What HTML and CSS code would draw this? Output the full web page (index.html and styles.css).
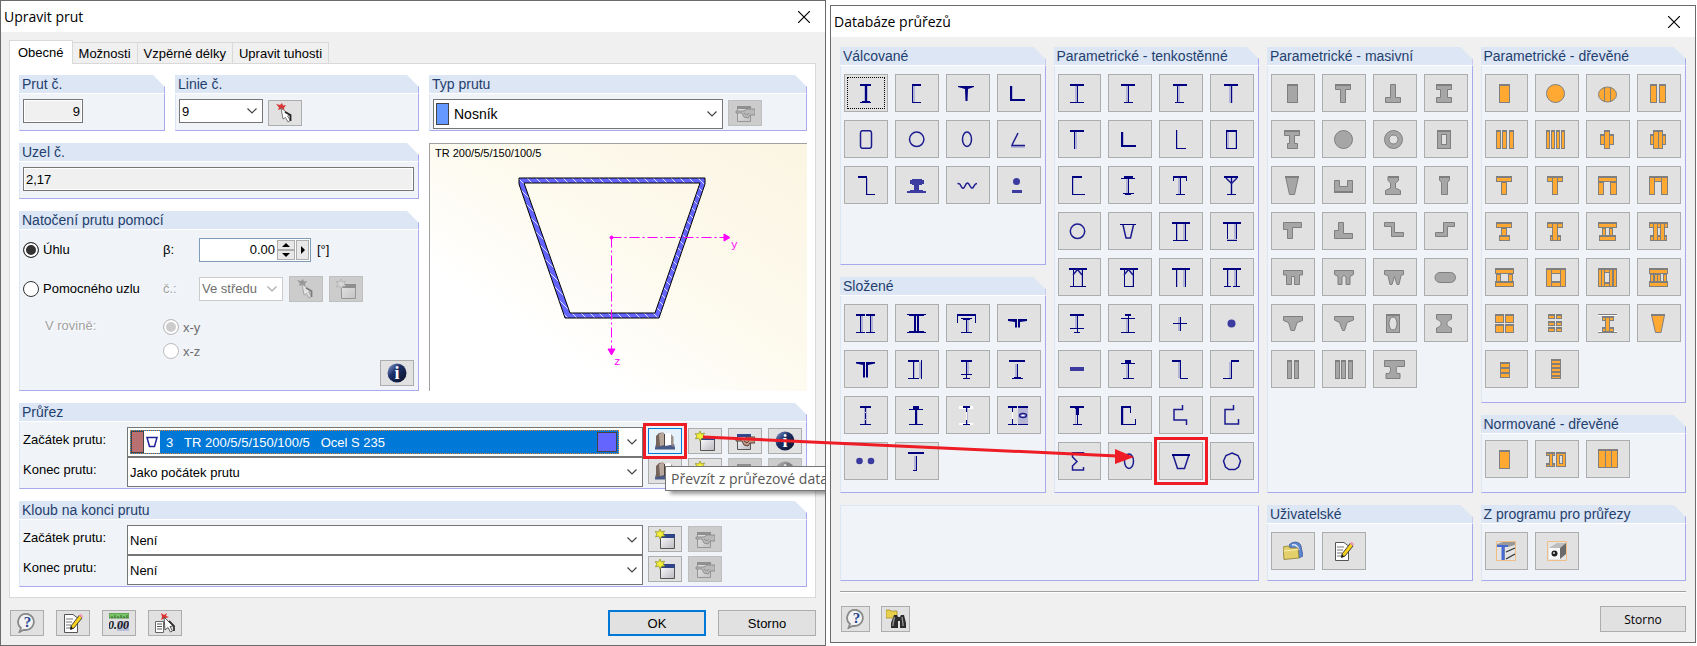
FILE: index.html
```html
<!DOCTYPE html>
<html lang="cs">

<head>
    <meta charset="UTF-8">
    <meta name="viewport" content="width=device-width, initial-scale=1.0">
    <title>Upravit prut</title>
    <link rel="stylesheet" href="styles.css">
</head>

<body>
    <svg class="paints" aria-hidden="true">
        <linearGradient id="ball" x1="0" y1="0" x2="1" y2="1">
            <stop offset="0" stop-color="#8fa6d8" />
            <stop offset=".4" stop-color="#1d2f68" />
            <stop offset="1" stop-color="#0a0f24" />
        </linearGradient>
        <linearGradient id="sheet" x1="0" y1="0" x2="1" y2="1">
            <stop offset="0" stop-color="#fff" />
            <stop offset="1" stop-color="#b9b9c0" />
        </linearGradient>
    </svg>
    <svg class="sprite" aria-hidden="true">
        <symbol id="chevron" viewBox="0 0 10 6"><path d="M.5 .5L5 5L9.500 .5" fill="none" stroke="currentColor" stroke-width="1.200" /></symbol>
        <symbol id="close" viewBox="0 0 12 12"><path d="M0 0L12 12M12 0L0 12" stroke="#000" stroke-width="1.200" /></symbol>
        <symbol id="pick" viewBox="0 0 20 20">
            <path d="M1 1L5 2L7 0L8 2.500L11 2L9 5L9.500 8L6 6L3 7L4 4.500Z" fill="#d93636" />
            <path d="M6 5L15 12L12.500 13L15.500 17.500L13 19L10.500 14.500L8 16Z" fill="#fff" stroke="#777" />
            <path d="M10 9L15.500 12V18" fill="none" stroke="#222" stroke-width="1.800" />
        </symbol>
        <symbol id="hand" viewBox="0 0 20 20">
            <path d="M2.500 3.500H15.500V18.500H2.500Z" fill="url(#sheet)" stroke="#555" />
            <path d="M2 3H16V6H2Z" fill="#33468c" />
            <path d="M20 6L12 6L9 8H1V10H7L9 14L13 15L15 12L20 12Z" fill="#c09a86" stroke="#5c4236" />
            <path d="M9 10L12 12L14 10" fill="none" stroke="#5c4236" />
        </symbol>
        <symbol id="new-window" viewBox="0 0 20 20">
            <path d="M5.500 6.500H19.500V19.500H5.500Z" fill="url(#sheet)" stroke="#555" />
            <path d="M5 5H20V9H5Z" fill="#2f4387" />
            <path d="M5 0L6.200 3L9.500 2L8 5L10 7L6.800 7.200L5 10L3.800 7L.5 8L2 5L0 2.500L3.500 3Z" fill="#f5f03a" stroke="#8d8a1c" stroke-width=".7" />
        </symbol>
        <symbol id="book" viewBox="0 0 20 20">
            <path d="M0 17L1 13H19L20 17V18.500H0Z" fill="#4a5a86" />
            <path d="M1 5L4 2L8 1.500L9.500 3V14L7 15L1 16Z" fill="#75645c" />
            <path d="M4 3L8 1.500L9 3V14L5 15Z" fill="#b8a79c" />
            <path d="M9.500 3L14 2L16 3V14L9.500 15Z" fill="#fff" />
            <path d="M16 3L18.500 6V16L16 14Z" fill="#9c9088" />
            <path d="M9.500 3V15" stroke="#4c423d" />
        </symbol>
        <symbol id="info" viewBox="0 0 20 20">
            <circle cx="10" cy="10" r="9.500" fill="url(#ball)" />
            <text x="10" y="16" text-anchor="middle" class="glyph glyph-info">i</text>
        </symbol>
        <symbol id="help" viewBox="0 0 20 20">
            <path d="M10.500 1A8 8 0 1 1 7 16.800L2.500 19L4 15A8 8 0 0 1 10.500 1Z" fill="#f2f2f2" stroke="#8a8a8a" stroke-width="1.800" />
            <text x="10.500" y="14" text-anchor="middle" class="glyph glyph-help">?</text>
        </symbol>
        <symbol id="note" viewBox="0 0 20 20">
            <path d="M1.500 1.500H10L14.500 5V19.500H1.500Z" fill="#fff" stroke="#555" />
            <path d="M3 6H10M3 9H9M3 12H8M3 15H11" stroke="#777" />
            <path d="M16.500 2L19 5L11 15L7.500 16.500L8 13Z" fill="#f7cf1d" stroke="#333" stroke-width=".9" />
            <path d="M16 2.500L17.500 .5L20 3L19 5Z" fill="#ef9db0" />
            <path d="M8 13L7.500 16.500L10 15.500Z" fill="#111" />
        </symbol>
        <symbol id="units" viewBox="0 0 20 20">
            <path d="M0 0H20V5H0Z" fill="#7cc46c" stroke="#4c8b40" />
            <path d="M3 3V5M6 2V5M9 3V5M12 2V5M15 3V5M18 2V5" stroke="#2f6a26" />
            <path d="M8 8H20V18H8Z" fill="#b5bdd8" />
            <text x="-1" y="16" class="glyph glyph-units">0.00</text>
        </symbol>
        <symbol id="pick-list" viewBox="0 0 20 20">
            <path d="M6 0L9 2L12 0L11 3L14 4L11 5L11 8L9 5.500L6 7L7 4Z" fill="#e03030" />
            <path d="M.5 8.500H8.500V19.500H.5Z" fill="#fff" stroke="#666" />
            <path d="M2 11H7M2 13.500H7M2 16H7" stroke="#555" />
            <path d="M9 4L18 13L15 13.500L17.500 18L15.500 19L13 14.500L10 17Z" fill="#fff" stroke="#555" />
            <path d="M14 8L19 13V18" fill="none" stroke="#333" stroke-width="1.800" />
        </symbol>
        <symbol id="find" viewBox="0 0 20 20">
            <path d="M0 1H4L5 2H11V9H0Z" fill="#e8cf4e" stroke="#9c8522" stroke-width=".7" />
            <path d="M8 6H11L12 8H14L15 6H18L20 14V19H14V12H12V19H5V14Z" fill="#2c2c2c" />
            <path d="M8.500 8L7 15V17M16 8L17 15V17" fill="none" stroke="#999" stroke-width="1.300" />
        </symbol>
        <symbol id="library" viewBox="0 0 20 20">
            <path d="M6 4C9 0 17 0 18 5L20 15L16 17L8 8Z" fill="#5d84cf" stroke="#34538f" stroke-width=".7" />
            <path d="M9 4Q14 3 16 9" fill="none" stroke="#dce8fb" stroke-width="1.500" />
            <path d="M0 6L5 5L7 7L15 7L16 17L1 18.500Z" fill="#e3d06b" stroke="#8d7c2d" stroke-width=".8" />
            <path d="M1 10L15 8.500" stroke="#f7efb4" />
        </symbol>
        <symbol id="shape-thin" viewBox="0 0 20 20">
            <path d="M.5 .5H19.500V19.500H.5Z" fill="#e4e4e4" stroke="#f0bd84" />
            <path d="M1 3L7 1H19V4L12 6H9V19H6V6H1Z" fill="#999" />
            <path d="M1 4H12V6H8.500V19H5.500V6H1Z" fill="#4769d0" />
            <path d="M10 11L19 7M10 18L19 13" stroke="#333" stroke-width="1.300" />
        </symbol>
        <symbol id="shape-massive" viewBox="0 0 20 20">
            <path d="M.5 .5H19.500V19.500H.5Z" fill="#e4e4e4" stroke="#f0bd84" />
            <path d="M2 7L10 2H19L13 7Z" fill="#bdbdbd" />
            <path d="M13 7L19 2V13L13 18Z" fill="#6a6a6a" />
            <path d="M2 7H13V18H2Z" fill="#f7f7f7" />
            <circle cx="7.500" cy="12.500" r="3" fill="#222" />
            <circle cx="7" cy="12" r="1" fill="#ddd" />
        </symbol>
        <symbol id="trapezoid" viewBox="0 0 12 12"><path d="M1 1.500H11L8.500 10.500H3.500Z" fill="#fff" stroke="#22229a" stroke-width="1.500" /></symbol>
    </svg>

    <main class="desktop">
        <section class="dialog" aria-label="Upravit prut">
            <header class="titlebar">
                <h1>Upravit prut</h1>
                <button class="close" aria-label="Zavřít"><svg><use href="#close" /></svg></button>
            </header>

            <div class="member">
                <nav class="tabs">
                    <button class="tab active">Obecné</button>
                    <button class="tab">Možnosti</button>
                    <button class="tab">Vzpěrné délky</button>
                    <button class="tab">Upravit tuhosti</button>
                </nav>

                <div class="page">
                    <div class="columns">
                        <div class="stack">
                            <div class="numbers">
                                <section class="group">
                                    <h2><label for="member-no">Prut č.</label></h2>
                                    <div class="group-body row">
                                        <input class="field member-no" id="member-no" value="9" readonly>
                                    </div>
                                </section>
                                <section class="group">
                                    <h2><label for="line-no">Linie č.</label></h2>
                                    <div class="group-body row">
                                        <span class="combo line-no">
                                            <select id="line-no"><option>9</option></select>
                                            <svg class="chevron"><use href="#chevron" /></svg>
                                        </span>
                                        <button class="tool" aria-label="Vybrat linii"><svg><use href="#pick" /></svg></button>
                                    </div>
                                </section>
                            </div>
                            <section class="group">
                                <h2><label for="node-no">Uzel č.</label></h2>
                                <div class="group-body row">
                                    <input class="field" id="node-no" value="2,17" readonly>
                                </div>
                            </section>
                            <section class="group grow">
                                <h2>Natočení prutu pomocí</h2>
                                <div class="group-body rotation">
                                    <div class="rotation-form">
                                        <label class="radio"><input type="radio" name="rotation" checked>Úhlu</label>
                                        <label for="beta">β:</label>
                                        <div class="row-inline">
                                            <span class="spin">
                                                <input id="beta" value="0.00">
                                                <span class="spin-steps">
                                                    <button aria-label="Zvýšit"><i class="up"></i></button>
                                                    <button aria-label="Snížit"><i class="down"></i></button>
                                                </span>
                                                <button class="spin-more" aria-label="Další"><i class="right"></i></button>
                                            </span>
                                            <span>[°]</span>
                                        </div>
                                        <label class="radio"><input type="radio" name="rotation">Pomocného uzlu</label>
                                        <label class="muted" for="node-pos">č.:</label>
                                        <div class="row-inline">
                                            <span class="combo node-pos off">
                                                <select id="node-pos" disabled><option>Ve středu</option></select>
                                                <svg class="chevron"><use href="#chevron" /></svg>
                                            </span>
                                            <button class="tool" disabled aria-label="Vybrat uzel"><svg><use href="#pick" /></svg></button>
                                            <button class="tool" disabled aria-label="Nový uzel"><svg><use href="#new-window" /></svg></button>
                                        </div>
                                        <span class="plane-label muted">V rovině:</span>
                                        <div class="plane">
                                            <label class="radio off"><input type="radio" name="plane" checked disabled>x-y</label>
                                            <label class="radio off"><input type="radio" name="plane" disabled>x-z</label>
                                        </div>
                                    </div>
                                    <button class="tool" aria-label="Informace"><svg><use href="#info" /></svg></button>
                                </div>
                            </section>
                        </div>

                        <div class="stack">
                            <section class="group">
                                <h2><label for="member-type">Typ prutu</label></h2>
                                <div class="group-body row">
                                    <span class="combo tall member-type">
                                        <i class="swatch blue"></i>
                                        <select id="member-type"><option>Nosník</option></select>
                                        <svg class="chevron"><use href="#chevron" /></svg>
                                    </span>
                                    <button class="tool" disabled aria-label="Upravit typ"><svg><use href="#hand" /></svg></button>
                                </div>
                            </section>
                            <div class="preview">
                                <svg viewBox="0 0 377 247">
                                    <defs>
                                        <pattern id="hatch" width="9" height="9" patternUnits="userSpaceOnUse">
                                            <path d="M0 0H9V9H0Z" fill="#6464ff" />
                                            <path d="M0 0L9 9" stroke="#dcdcff" />
                                        </pattern>
                                    </defs>
                                    <text x="5" y="13" class="preview-name">TR 200/5/5/150/100/5</text>
                                    <path d="M89 34H275V40L229 174H135L89 40ZM94 39L140 169H225L270 39Z" fill="url(#hatch)" fill-rule="evenodd" stroke="#000" />
                                    <g class="axis">
                                        <path d="M181.500 93.500H295M181.500 93.500V207" stroke-dasharray="10 3 2 3" />
                                        <circle cx="181.500" cy="93.500" r="1.500" />
                                        <path class="tip" d="M294 90L300 93.500L294 97Z" />
                                        <path class="tip" d="M178 205L181.500 211L185 205Z" />
                                        <text x="301" y="104">y</text>
                                        <text x="184" y="221">z</text>
                                    </g>
                                </svg>
                            </div>
                        </div>
                    </div>

                    <section class="group">
                        <h2>Průřez</h2>
                        <div class="group-body ends">
                            <label for="section-start">Začátek prutu:</label>
                            <span class="combo tall">
                                <span class="picked">
                                    <i class="swatch brown"></i>
                                    <svg class="mini"><use href="#trapezoid" /></svg>
                                    <select id="section-start"><option>3&nbsp;&nbsp;&nbsp;TR 200/5/5/150/100/5&nbsp;&nbsp;&nbsp;Ocel S 235</option></select>
                                    <i class="swatch violet"></i>
                                </span>
                                <svg class="chevron"><use href="#chevron" /></svg>
                            </span>
                            <div class="tools">
                                <span class="anchor">
                                    <button class="tool hot marked" aria-label="Převzít z databáze" aria-describedby="tip"><svg><use href="#book" /></svg></button>
                                    <span class="tooltip" id="tip" role="tooltip">Převzít z průřezové data</span>
                                </span>
                                <button class="tool" aria-label="Nový průřez"><svg><use href="#new-window" /></svg></button>
                                <button class="tool" aria-label="Upravit průřez"><svg><use href="#hand" /></svg></button>
                                <button class="tool" aria-label="Informace o průřezu"><svg><use href="#info" /></svg></button>
                            </div>
                            <label for="section-end">Konec prutu:</label>
                            <span class="combo tall">
                                <select id="section-end"><option>Jako počátek prutu</option></select>
                                <svg class="chevron"><use href="#chevron" /></svg>
                            </span>
                            <div class="tools">
                                <button class="tool" aria-label="Převzít z databáze"><svg><use href="#book" /></svg></button>
                                <button class="tool" aria-label="Nový průřez"><svg><use href="#new-window" /></svg></button>
                                <button class="tool" disabled aria-label="Upravit průřez"><svg><use href="#hand" /></svg></button>
                                <button class="tool" disabled aria-label="Informace o průřezu"><svg><use href="#info" /></svg></button>
                            </div>
                        </div>
                    </section>

                    <section class="group">
                        <h2>Kloub na konci prutu</h2>
                        <div class="group-body ends">
                            <label for="hinge-start">Začátek prutu:</label>
                            <span class="combo tall">
                                <select id="hinge-start"><option>Není</option></select>
                                <svg class="chevron"><use href="#chevron" /></svg>
                            </span>
                            <div class="tools">
                                <button class="tool" aria-label="Nový kloub"><svg><use href="#new-window" /></svg></button>
                                <button class="tool" disabled aria-label="Upravit kloub"><svg><use href="#hand" /></svg></button>
                            </div>
                            <label for="hinge-end">Konec prutu:</label>
                            <span class="combo tall">
                                <select id="hinge-end"><option>Není</option></select>
                                <svg class="chevron"><use href="#chevron" /></svg>
                            </span>
                            <div class="tools">
                                <button class="tool" aria-label="Nový kloub"><svg><use href="#new-window" /></svg></button>
                                <button class="tool" disabled aria-label="Upravit kloub"><svg><use href="#hand" /></svg></button>
                            </div>
                        </div>
                    </section>
                </div>

                <footer class="actions">
                    <button class="tool" aria-label="Nápověda"><svg><use href="#help" /></svg></button>
                    <button class="tool" aria-label="Komentář"><svg><use href="#note" /></svg></button>
                    <button class="tool" aria-label="Jednotky"><svg><use href="#units" /></svg></button>
                    <button class="tool" aria-label="Převzít"><svg><use href="#pick-list" /></svg></button>
                    <button class="push default">OK</button>
                    <button class="push">Storno</button>
                </footer>
            </div>
        </section>

        <section class="dialog library" aria-label="Databáze průřezů">
            <header class="titlebar">
                <h1>Databáze průřezů</h1>
                <button class="close" aria-label="Zavřít"><svg><use href="#close" /></svg></button>
            </header>

            <div class="catalog">
                <div class="stack">
                    <section class="group grow">
                        <h2>Válcované</h2>
                        <div class="group-body tiles steel" data-set="rolled"></div>
                    </section>
                    <section class="group">
                        <h2>Složené</h2>
                        <div class="group-body tiles steel" data-set="built"></div>
                    </section>
                </div>
                <section class="group">
                    <h2>Parametrické - tenkostěnné</h2>
                    <div class="group-body tiles steel" data-set="thin"></div>
                </section>
                <section class="group">
                    <h2>Parametrické - masivní</h2>
                    <div class="group-body tiles concrete" data-set="massive"></div>
                </section>
                <div class="stack">
                    <section class="group grow">
                        <h2>Parametrické - dřevěné</h2>
                        <div class="group-body tiles timber" data-set="timber"></div>
                    </section>
                    <section class="group">
                        <h2>Normované - dřevěné</h2>
                        <div class="group-body tiles timber standard" data-set="standard"></div>
                    </section>
                </div>

                <div class="group empty"><div class="group-body"></div></div>
                <section class="group">
                    <h2>Uživatelské</h2>
                    <div class="group-body tiles short">
                        <button class="tile" aria-label="Knihovna"><svg><use href="#library" /></svg></button>
                        <button class="tile" aria-label="Vlastní průřez"><svg><use href="#note" /></svg></button>
                    </div>
                </section>
                <section class="group">
                    <h2>Z programu pro průřezy</h2>
                    <div class="group-body tiles short">
                        <button class="tile" aria-label="Tenkostěnné průřezy"><svg><use href="#shape-thin" /></svg></button>
                        <button class="tile" aria-label="Masivní průřezy"><svg><use href="#shape-massive" /></svg></button>
                    </div>
                </section>
            </div>

            <footer class="catalog-actions">
                <button class="tool" aria-label="Nápověda"><svg><use href="#help" /></svg></button>
                <button class="tool" aria-label="Hledat"><svg><use href="#find" /></svg></button>
                <button class="push">Storno</button>
            </footer>
        </section>

        <svg class="pointer" viewBox="0 0 431 40" preserveAspectRatio="none" aria-hidden="true">
            <path d="M0 7L414 26" stroke="#ee1c25" stroke-width="3" />
            <path d="M412 19L431 27L412 34Z" fill="#ee1c25" />
        </svg>
    </main>

    <script src="sections.js"></script>
</body>

</html>
```

FILE: styles.css
```css
* {
    box-sizing: border-box;
}

body {
    margin: 0;
    background-color: white;
    color: black;
    font-family: "Liberation Sans", Arial, sans-serif;
    font-size: 13px;
}

button,
input,
select {
    margin: 0;
    font: inherit;
    color: inherit;
}

button {
    padding: 0;
}

.paints {
    position: absolute;
    width: 0;
    height: 0;
}

.sprite {
    display: none;
}

.glyph {
    font-family: "Liberation Serif", serif;
    font-weight: bold;
}

.glyph-info {
    font-size: 18px;
    fill: white;
}

.glyph-help {
    font-size: 15px;
    fill: #24408f;
}

.glyph-units {
    font-size: 12px;
    font-style: italic;
    fill: #111;
}

.desktop {
    position: relative;
    display: grid;
    grid-template-columns: 826fr 866fr;
    gap: 4px;
    padding-right: 1px;
    align-items: start;
}

/* dialogs */
.dialog {
    overflow: hidden;
    border: 1px solid #6b6b6b;
    background-color: #f0f0f0;
}

.library {
    margin-top: 5px;
}

.titlebar {
    display: flex;
    align-items: center;
    justify-content: space-between;
    height: 31px;
    padding: 0 15px 0 3px;
    background-color: white;
}

.titlebar h1 {
    margin: 0;
    font-family: "Open Sans", "Noto Sans", sans-serif;
    font-size: 14px;
    font-weight: normal;
}

.close {
    display: grid;
    border: none;
    background: none;
}

.close svg {
    width: 12px;
    height: 12px;
}

.member {
    padding: 8px 9px 9px 8px;
}

/* tabs */
.tabs {
    display: flex;
    align-items: flex-end;
}

.tab {
    height: 21px;
    padding: 0 6px;
    border: 1px solid #d9d9d9;
    border-left: none;
    border-bottom: none;
    background-color: #f0f0f0;
}

.tab.active {
    height: 24px;
    margin-bottom: -1px;
    padding: 0 8px;
    border-left: 1px solid #d9d9d9;
    background-color: white;
    z-index: 1;
}

.page {
    display: flex;
    flex-direction: column;
    gap: 12px;
    padding: 11px 8px 10px 9px;
    border: 1px solid #d9d9d9;
    background-color: white;
}

.columns {
    display: grid;
    grid-template-columns: 400fr 378fr;
    gap: 10px;
}

.stack {
    display: flex;
    flex-direction: column;
    gap: 12px;
}

.numbers {
    display: grid;
    grid-template-columns: 146fr 244fr;
    gap: 10px;
}

/* groups */
.group {
    display: flex;
    flex-direction: column;
    min-width: 0;
}

.grow {
    flex: 1;
}

.group h2 {
    height: 19px;
    margin: 0;
    padding-left: 3px;
    border-right: 1px solid #a9a9ee;
    border-bottom: 1px solid white;
    background-color: #dde6f4;
    clip-path: polygon(0 0, calc(100% - 12px) 0, 100% 12px, 100% 100%, 0 100%);
    color: #1f3f6e;
    font-size: 14px;
    font-weight: normal;
    line-height: 18px;
}

.group-body {
    flex: 1;
    border: 1px solid #a9a9ee;
    border-top: none;
    border-left-color: #dde6f4;
    background-color: #f0f4f9;
}

.row {
    display: flex;
    gap: 5px;
    min-height: 37px;
    padding: 5px 4px 4px 3px;
}

.field {
    width: 100%;
    height: 24px;
    padding: 0 2px;
    border: 1px solid #767676;
    background-color: #f0f0f0;
    box-shadow: inset 0 0 0 1px white;
}

.member-no {
    width: 60px;
    text-align: right;
}

.combo {
    display: flex;
    align-items: center;
    height: 24px;
    padding-right: 5px;
    border: 1px solid #767676;
    background-color: white;
}

.combo select {
    flex: 1;
    min-width: 0;
    height: 100%;
    padding: 0 2px;
    border: none;
    background: none;
    appearance: none;
    outline: none;
}

.combo.off {
    border-color: #ccc;
    color: #6d6d6d;
}

.combo select:disabled {
    opacity: 1;
}

.combo.tall {
    height: 30px;
}

.chevron {
    width: 10px;
    height: 6px;
    color: #444;
}

.off .chevron {
    color: #aaa;
}

.line-no {
    width: 84px;
}

.node-pos {
    width: 84px;
}

.member-type {
    width: 290px;
    margin-bottom: -6px;
    padding-left: 2px;
}

.swatch {
    width: 13px;
    height: 22px;
    border: 1px solid #444;
}

.member-type select {
    padding-left: 5px;
    font-size: 14px;
}

.blue {
    background-color: #6699ff;
}

.brown {
    background-color: #b87070;
}

.violet {
    width: 20px;
    height: 20px;
    background-color: #6464ff;
}

/* small buttons */
.tool {
    display: grid;
    flex: none;
    place-items: center;
    width: 34px;
    height: 26px;
    border: 1px solid #adadad;
    background-color: #e1e1e1;
}

.row .tool {
    margin-top: 1px;
}

.tool svg {
    width: 20px;
    height: 20px;
    overflow: visible;
}

.tool:disabled {
    border-color: #bfbfbf;
    background-color: #ccc;
}

.tool:disabled svg {
    filter: grayscale(1);
    opacity: 0.45;
}

.tool.hot {
    border-color: #0078d7;
    background-color: #e5f1fb;
}

.marked {
    outline: 3px solid #ee1c25;
    outline-offset: 2px;
}

/* rotation */
.rotation {
    display: flex;
    justify-content: space-between;
    padding: 0 4px 4px 3px;
}

.rotation > .tool {
    align-self: flex-end;
}

.rotation-form {
    display: grid;
    grid-template-columns: 140px 36px auto;
    grid-template-rows: 39px 39px auto;
    align-items: center;
    align-content: start;
}

.radio {
    display: flex;
    align-items: center;
    gap: 4px;
}

.radio input {
    width: 16px;
    height: 16px;
    border: 1px solid #333;
    border-radius: 50%;
    background-color: white;
    appearance: none;
}

.radio input:checked {
    background-color: #333;
    box-shadow: inset 0 0 0 2px white;
}

.radio.off {
    color: #6d6d6d;
}

.radio.off input {
    border-color: #bbb;
}

.radio.off input:checked {
    background-color: #ccc;
}

.row-inline {
    display: flex;
    align-items: center;
    gap: 6px;
}

.muted {
    color: #a0a0a0;
    text-shadow: 1px 1px white;
}

.spin {
    display: flex;
    align-items: center;
    gap: 1px;
    width: 112px;
    height: 24px;
    padding: 1px;
    border: 1px solid #7f9db9;
    background-color: white;
}

.spin input {
    flex: 1;
    width: 0;
    padding: 0 1px;
    border: none;
    background: none;
    text-align: right;
}

.spin-steps {
    display: grid;
    width: 18px;
    height: 20px;
}

.spin button {
    display: grid;
    place-items: center;
    border: 1px solid #adadad;
    background-color: #e8e8e8;
}

.spin .spin-more {
    width: 13px;
    height: 20px;
}

.up,
.down {
    border: 4px solid transparent;
    border-top-width: 0;
    border-bottom: 4px solid black;
}

.down {
    transform: rotate(180deg);
}

.right {
    border: 4px solid transparent;
    border-right-width: 0;
    border-left: 4px solid black;
}

.plane-label {
    align-self: start;
    padding: 8px 0 0 22px;
    line-height: 20px;
}

.plane {
    display: grid;
    grid-column: 2 / 4;
    grid-auto-rows: 24px;
    padding-top: 7px;
}

/* preview */
.preview {
    flex: 1;
    border-top: 1px solid #a0a0a0;
    border-left: 1px solid #a0a0a0;
    background-image: linear-gradient(to top right, white 25%, #fdfaee 55%, #fbf5e3);
}

.preview svg {
    display: block;
    width: 100%;
}

.preview-name {
    font-size: 11px;
}

.axis {
    fill: none;
    stroke: #f0f;
}

.axis circle,
.axis .tip {
    fill: #f0f;
}

.axis text {
    fill: #f0f;
    stroke: none;
    font-family: "Liberation Mono", monospace;
    font-size: 11px;
}

/* start / end rows */
.ends {
    display: grid;
    grid-template-columns: 104px 1fr 154px;
    column-gap: 5px;
    padding: 5px 4px 1px 3px;
}

.ends label {
    margin-right: -5px;
    line-height: 26px;
}

.ends .combo {
    margin-left: -5px;
}

.tools {
    display: flex;
    gap: 6px;
    padding-top: 1px;
}

.picked {
    display: flex;
    flex: 1;
    align-items: center;
    min-width: 0;
    height: 24px;
    margin: 0 8px 0 2px;
    padding-right: 1px;
    border: 1px dotted #e08030;
    background-color: #0078d7;
    color: white;
}

.mini {
    width: 16px;
    height: 22px;
    padding: 4px 2px;
    background-color: white;
}

.picked select {
    padding-left: 6px;
}

.anchor {
    position: relative;
}

.tooltip {
    position: absolute;
    z-index: 2;
    top: 38px;
    left: 17px;
    height: 25px;
    padding: 0 5px;
    border: 1px solid #767676;
    background-color: white;
    box-shadow: 4px 4px 4px -1px rgba(0, 0, 0, 0.4);
    color: #575757;
    font-family: "Open Sans", "Noto Sans", sans-serif;
    font-size: 14px;
    line-height: 23px;
    white-space: nowrap;
}

/* dialog buttons */
.actions {
    display: flex;
    gap: 12px;
    padding: 12px 0 0 1px;
}

.push {
    width: 98px;
    height: 26px;
    border: 1px solid #adadad;
    background-color: #e1e1e1;
}

.push.default {
    margin-left: auto;
    border: 2px solid #0078d7;
}

/* section catalog */
.catalog {
    display: grid;
    grid-template-columns: repeat(4, 1fr);
    gap: 12px 8px;
    margin: 0 9px;
    padding: 10px 0;
}

.tiles {
    display: grid;
    grid-template-columns: repeat(4, 1fr);
    gap: 8px 7px;
    align-content: start;
    padding: 8px 4px 12px 3px;
}

.tiles.standard {
    padding: 6px 4px 14px 3px;
}

.tiles.short {
    padding-bottom: 10px;
}

.tile {
    display: grid;
    place-items: center;
    height: 38px;
    border: 1px solid #adadad;
    background-color: #e1e1e1;
}

.tile svg {
    width: 20px;
    height: 20px;
    overflow: visible;
}

.tile rect {
    shape-rendering: crispEdges;
}

.tile.focus {
    outline: 1px dotted black;
    outline-offset: -4px;
}

.empty {
    grid-column: span 2;
    border-top: 1px solid #dde6f4;
}

.catalog-actions {
    display: flex;
    gap: 11px;
    margin: 0 9px;
    padding: 14px 0 10px 1px;
    border-top: 1px solid #a0a0a0;
    box-shadow: inset 0 1px white;
}

.catalog-actions .tool {
    width: 29px;
}

.catalog-actions .push {
    width: 86px;
    margin-left: auto;
    font-family: "Open Sans", "Noto Sans", sans-serif;
    font-size: 12px;
}

/* icon paints */
.steel .ink {
    fill: #000080;
}

.steel .soft {
    fill: #3c3ca0;
}

.steel .light {
    fill: #b4b4d4;
}

.steel .line {
    fill: none;
    stroke: #1c1c90;
    stroke-width: 1.5;
}

.white {
    fill: white;
}

.concrete .edge,
.timber .edge {
    fill: #7f7f7f;
}

.concrete .solid {
    fill: #a6a6a6;
}

.timber .solid {
    fill: #ffa932;
}

.solid.cut {
    stroke: #7f7f7f;
}

.hole {
    fill: #e1e1e1;
    stroke: #7f7f7f;
}

/* arrow over both dialogs */
.pointer {
    position: absolute;
    top: 430px;
    left: 41.4%;
    width: 25.4%;
    height: 40px;
    pointer-events: none;
}
```

FILE: sections.js
```javascript
// Each icon is a list of parts on a 20 x 20 grid, separated by ";"
//   x y w h    bar                 ~ x y w h   light bar
//   % x y w h  soft bar            w x y w h   white bar
//   g x y w h  plain edge bar      h x y w h   rectangular hole
//   o cx cy rx ry  outline         c cx cy r   filled circle
//   q cx cy rx ry  round hole      e cx cy rx ry  filled ellipse
//   s M...     stroked path        M...        filled path
const sets = {
    rolled: [
        '4 1 11 2;9 3 2 16;4 19 11 1;6 18 8 1;~8 3 1 15;~11 3 1 15',
        '5 1 9 2;5 1 1 19;5 19 9 1;~6 3 2 16',
        'M0 3H16V4L10 6L9.5 18H7.5L7 6L0 4Z',
        '1 3 2 15;1 16 15 2;~3 3 1 13',
        's M6 1.7H14Q15.500 2 15.5 4V17Q15.500 19 14 19.3H6Q4.5 19 4.5 17V4Q4.5 2 6 1.7Z',
        'o 9.7 10.3 7.2 7.2',
        'o 9 10.3 4.5 7.2',
        '~2 17 14 2;s M9 4L3.5 15L3 16.5H16',
        '2 1 9 2;10 1 1 18;10 19 9 1;~11 3 1 16',
        '% 5 4 10 6;% 3 5 14 4;% 7 10 5 5;% 3 15 13 1;% 0 16 19 2',
        's M-.5 8.500C2 8.500 2 9 3.5 12C4.500 14 6 13.5 7 11S8.5 8 9.5 8S11 9 12 11S14.500 14 15.5 12S17 8.5 19 8.5',
        'c 7.5 6.5 3.5;% 3 15 10 3'
    ],
    built: [
        '0 1 9 2;0 19 9 1;4 3 1 16;10 1 9 2;10 19 9 1;14 3 1 16;~5 3 2 16;~15 3 2 16',
        '0 1 19 1;2 2 15 1;7 3 2 16;10 3 2 16;2 18 15 1;0 19 19 1',
        '-1 1 19 2;-1 1 1 9;17 1 1 9;3 5 11 1;8 6 1 13;3 19 11 1;~9 6 2 13;5 6 7 1',
        'M-1 6H8V14.5H6V9L-1 8Z;M9 6H18V8L11 9V14.5H9Z',
        'M0 3H9V18.5H7V6L0 4.5Z;M10 3H19V4.5L12 6V18.5H10Z',
        '1 1 11 2;1 19 11 1;6 3 1 16;14 1 1 19;~7 3 1 16;~12 3 2 16',
        '3 1 11 2;8 3 1 16;3 15 11 1;5 19 7 1;~9 3 2 12',
        '0 1 16 2;3 19 11 1;8 5 1 14;5 18 7 1;~6 5 2 13',
        '4 1 11 2;4 19 11 1;9 3 1 4;9 8 1 6;9 15 1 4;~8 3 1 16;~10 3 1 16',
        '6 1 6 3;2 4 14 1;8 5 2 14;2 19 14 1;~10 5 1 14',
        'w 1 1 14 3;w 1 18 14 2;5 1 7 2;5 19 7 1;8 3 1 4;8 15 1 4;w 8 7 1 8;~9 3 1 16',
        '~9 3 10 16;-1 1 9 2;-1 19 9 1;3 3 1 4;3 14 1 5;w 3 7 1 7;9 1 10 2;9 19 10 1;o 14 10.5 3.5 2;w 13 10 2 1',
        'c 3.5 10 3.3;c 15 10 3.3',
        '1 1 16 2;9 5 1 14;6 19 4 1;~7 5 2 14'
    ],
    thin: [
        '1 1 14 2;8 3 1 16;1 19 14 1;~6 3 2 16',
        '1 1 14 2;8 3 1 16;4 19 9 1;~6 3 2 16',
        '2 1 14 2;6 3 1 16;4 19 9 1;~7 3 2 16',
        '2 1 14 2;9 3 1 17;~7 3 2 17;~10 3 1 17',
        '1 1 14 2;5 3 1 17;~6 3 2 17',
        '1 3 2 15;1 16 15 2;~3 3 1 13',
        '5 1 1 19;5 19 10 1;~6 1 1 18',
        '4 1 11 2;4 1 1 19;14 1 1 19;4 19 11 1;~5 3 2 16;~13 3 1 16',
        '3 1 10 2;3 1 1 19;3 19 13 1;~4 3 1 16',
        '4 1 9 2;1 3 14 1;8 4 1 14;3 18 11 1;5 19 6 1;~6 4 2 14',
        '2 1 14 2;2 1 1 5;15 1 1 5;9 3 1 16;5 19 9 1;~7 3 2 16',
        '2 1 14 2;9 3 1 16;5 19 9 1;~8 3 1 16;~10 3 1 16;s M4 3L9.5 8.5L15 3',
        'o 8.5 10.3 7.2 7.2',
        '0 3 16 1;s M3 4L6 17H10.5L13.5 4',
        '1 1 18 2;5 3 1 16;14 3 1 16;2 19 15 1;~6 3 1 16;~12 3 2 16',
        '1 1 18 2;5 3 1 17;14 3 1 17;5 19 10 1;~5 18 10 1;~12 3 2 15',
        '0 1 18 2;4 3 1 16;13 3 1 16;1 19 16 1;~12 3 1 16;s M4 8L8.5 2.500L13 8',
        '0 1 18 2;4 3 1 17;13 3 1 17;4 19 10 1;~12 3 1 16;s M4 8L8.5 2.500L13 8',
        '1 1 18 2;5 3 1 17;14 3 1 17;~6 3 1 17;~12 3 2 17',
        '1 1 18 2;5 3 1 16;14 3 1 16;2 19 7 1;11 19 7 1;~6 3 1 16;~12 3 2 16',
        '1 1 14 2;8 3 1 16;1 15 14 1;5 19 6 1;~6 3 2 12',
        '5 1 6 2;1 5 14 1;8 3 1 16;1 19 14 1;~6 6 2 13',
        '2 10 14 1;9 4 1 14;~7 4 2 6;~7 11 2 7',
        'c 9.5 10.5 4',
        '% 1 8 14 4',
        '5 1 6 3;1 4 14 1;8 5 1 14;3 19 11 1;~6 5 2 14',
        '1 1 9 2;9 1 1 18;9 19 8 1;~7 3 2 16',
        '9 1 8 2;9 3 1 16;1 19 9 1;~7 3 2 16',
        '1 1 14 2;6 3 4 1;7 4 3 6;8 10 1 9;4 19 9 1;~6 4 1 15',
        '1 1 10 2;1 1 2 19;1 19 15 1;10 1 1 7;15 14 1 6;~3 3 1 16',
        's M11.5 0V4.5H3V15H15.5V20',
        's M11.5 0V4.500H3V19H16.5V14',
        's M14.5 4V1.700H3.5V6L8 10.5L3.5 15V19H14.5V16',
        'o 9 10.3 4.5 7.2',
        's M2 3.7H18L13.5 17.5H6.5Z;1 3 18 2',
        's M10 2L16 4.5L18.5 10L16.5 16L13 18.5H7L3.5 16L1.5 10L4 4.5Z'
    ],
    massive: [
        '4 1 11 19',
        'M1.5 1.5H16.5V6.5H11.5V19.5H6.5V6.5H1.5Z;g 1 1 16 2',
        'M5.500 1.5H10.5V14.5H15.5V19.5H.5V14.5H5.5Z',
        'M.5 1.5H15.5V6.5H11.5V14.5H15.5V19.5H.5V14.5H4.5V6.5H.5Z;g 0 1 16 2',
        'M1.5 1.5H16.5V6.5H11.5V14.5H14.5V19.5H4.5V14.5H6.5V6.5H1.5Z;g 1 1 16 2',
        'c 9.5 10.5 9',
        'c 8.5 10.5 9;q 8.5 10.5 4.5 4.5',
        '1 1 14 19;h 5 5 6 11',
        'M2.5 1.5H15.5L11.5 19.5H6.5Z;g 2 1 14 2',
        'M.5 5.5H5.5V11.5H13.5V5.5H18.5V17.5H.5Z;g 0 16 19 2',
        'M3 1.5H13.5V5.5L10.5 8V13L15.5 15.5V19.5H.5V15.5L5.5 13V8L3 5.5Z;g 3 1 11 2',
        'M3.5 1.5H13.5V5L11.5 7.5V19.5H5.5V7.5L3.5 5Z;g 3 1 11 2',
        'M.5 1.5H18.5V6.5H9.5V17.5H4.5V8.5H.5Z',
        'M4.500 1.5H9.5V12.5H18.5V17.5H.5V9.5H4.5Z',
        'M-.5 1.5H9.5V11.5H18.5V15.5H6.5V5.5H-.5Z',
        'M18.5 1.5H7.5V11.5H-.5V15.5H11.5V5.5H18.5Z',
        'M.5 3.5H19.5V8H16.5V17.5H11.5V9.5H8.500V17.5H3.5V8H.5Z',
        'M.5 3.5H19.5V7.5L16 9.5V17.5H12V10L10 8.5L8 10V17.5H4V9.5L.5 7.5Z',
        'M-.5 3.5H18.5V7.5L16 8.5L14 17.5H12L9.5 9.5L7 17.5H5L3 8.5L-.5 7.5Z',
        'M4 5.5H14.5A5 5 0 0 1 14.5 15.5H4A5 5 0 0 1 4 5.5Z',
        'M.5 3.5H19.5V7.5L14 9.5L11.5 17.5H8L5.5 9.500L.5 7.5Z',
        'M.5 3.5H19.5V7L13 9.500L10.500 17.5H8.500L5.5 9.5L.5 7Z',
        '1 1 14 19;q 8 10.5 4 6.5',
        'M.5 1.5H15.5V6C12 8 11 8.5 11 10.5S12 13.5 15.5 15V19.5H.5V15C4 13.5 5 12.5 5 10.5S4 8 .5 6Z',
        '4 1 5 19;11 1 5 19',
        '1 1 5 19;7 1 5 19;14 1 5 19',
        'M-.5 1.5H19.5V7.5H12C11 8.5 11 12 12 14.5H15V19.500H1V14.5H4C6 12 6 9 4.5 7.5H-.5Z'
    ],
    timber: [
        '3 1 11 19',
        'c 8.5 10.5 9',
        'e 9.5 11.5 9 7.5;g 6 4 1 15;g 12 4 1 15',
        '1 1 7 19;10 1 7 19',
        '0 1 5 19;6 1 5 19;13 1 5 19',
        '-1 1 4 19;4 1 4 19;9 1 4 19;14 1 4 19',
        '2 5 14 11;6 1 6 19',
        '1 5 16 11;4 1 6 19;9 1 5 19',
        '5 6 6 14;0 1 16 6',
        '0 1 16 6;5 1 6 19',
        '0 6 6 14;12 6 7 14;0 1 19 6',
        '4 1 11 6;0 1 6 19;12 1 7 19',
        '0 1 16 6;5 6 6 9;3 14 11 6',
        '0 1 16 6;3 14 11 6;5 1 6 19',
        '0 1 19 6;4 6 4 9;11 6 4 9;1 14 17 6',
        '0 1 19 6;1 14 17 6;4 1 5 19;11 1 5 19',
        '0 6 5 9;12 6 5 9;-1 1 19 6;-1 14 19 6',
        '4 1 10 6;4 14 10 6;-1 1 6 19;13 1 6 19',
        '4 1 11 5;4 15 11 5;0 1 4 19;3 1 4 19;11 1 4 19;15 1 4 19',
        '1 6 4 9;5 6 4 9;8 6 4 9;14 6 4 9;0 1 19 6;0 14 19 6',
        '-1 1 9 9;9 1 9 9;-1 11 9 9;9 11 9 9',
        '1 1 7 5;9 1 6 5;1 8 7 5;9 8 6 5;1 14 7 5;9 14 6 5',
        'g 0 1 19 1;g 0 19 19 1;w 0 2 19 1;w 0 18 19 1;4 3 12 5;4 14 12 5;7 3 5 16',
        'M2.5 2H15.5L12 19.500H6.5Z;g 2 1 14 2',
        '4 3 10 6;4 8 10 6;4 13 10 6',
        '4 0 10 5;4 4 10 5;4 8 10 5;4 12 10 5;4 16 10 4'
    ],
    standard: [
        '3 1 11 19',
        '-1 3 9 4;-1 14 9 4;2 3 4 15;9 3 10 15;h 12 6 4 9',
        '0 0 8 19;7 0 7 19;13 0 7 19'
    ]
};

const bars = { '~': 'light', '%': 'soft', 'w': 'white', 'g': 'edge' };

function rect(cls, x, y, w, h) {
    return `<rect class="${cls}" x="${x}" y="${y}" width="${w}" height="${h}"/>`;
}

function ellipse(cls, cx, cy, rx, ry) {
    return `<ellipse class="${cls}" cx="${cx}" cy="${cy}" rx="${rx}" ry="${ry}"/>`;
}

function drawPart(part, steel) {
    const key = part[0];
    if (key === 'M') return `<path class="${steel ? 'ink' : 'solid cut'}" d="${part}"/>`;
    if (key === 's') return `<path class="line" d="${part.slice(2)}"/>`;

    const n = part.replace(/^[~%a-z]/, '').trim().split(' ').map(Number);
    if (bars[key]) return rect(bars[key], ...n);
    if (key === 'h') return rect('hole', n[0] + 0.5, n[1] + 0.5, n[2] - 1, n[3] - 1);
    if (key === 'o') return ellipse('line', ...n);
    if (key === 'q') return ellipse('hole', ...n);
    if (key === 'e') return ellipse('solid cut', ...n);
    if (key === 'c') return ellipse(steel ? 'soft' : 'solid cut', n[0], n[1], n[2], n[2]);
    if (steel) return rect('ink', ...n);

    // solid block with a gray edge, thicker on top
    const [x, y, w, h] = n;
    return rect('edge', x, y, w, h) + rect('solid', x + 1, y + 2, w - 2, h - 3);
}

document.querySelectorAll('[data-set]').forEach(function(box) {
    const steel = box.classList.contains('steel');
    const title = box.previousElementSibling.textContent;

    sets[box.dataset.set].forEach(function(icon, i) {
        const tile = document.createElement('button');
        tile.className = 'tile';
        tile.setAttribute('aria-label', `${title} ${i + 1}`);
        tile.innerHTML = `<svg viewBox="0 0 20 20">${icon.split(';').map(p => drawPart(p, steel)).join('')}</svg>`;
        box.appendChild(tile);
    });
});

document.querySelector('[data-set="rolled"] .tile').classList.add('focus');
document.querySelectorAll('[data-set="thin"] .tile')[34].classList.add('marked');
```
